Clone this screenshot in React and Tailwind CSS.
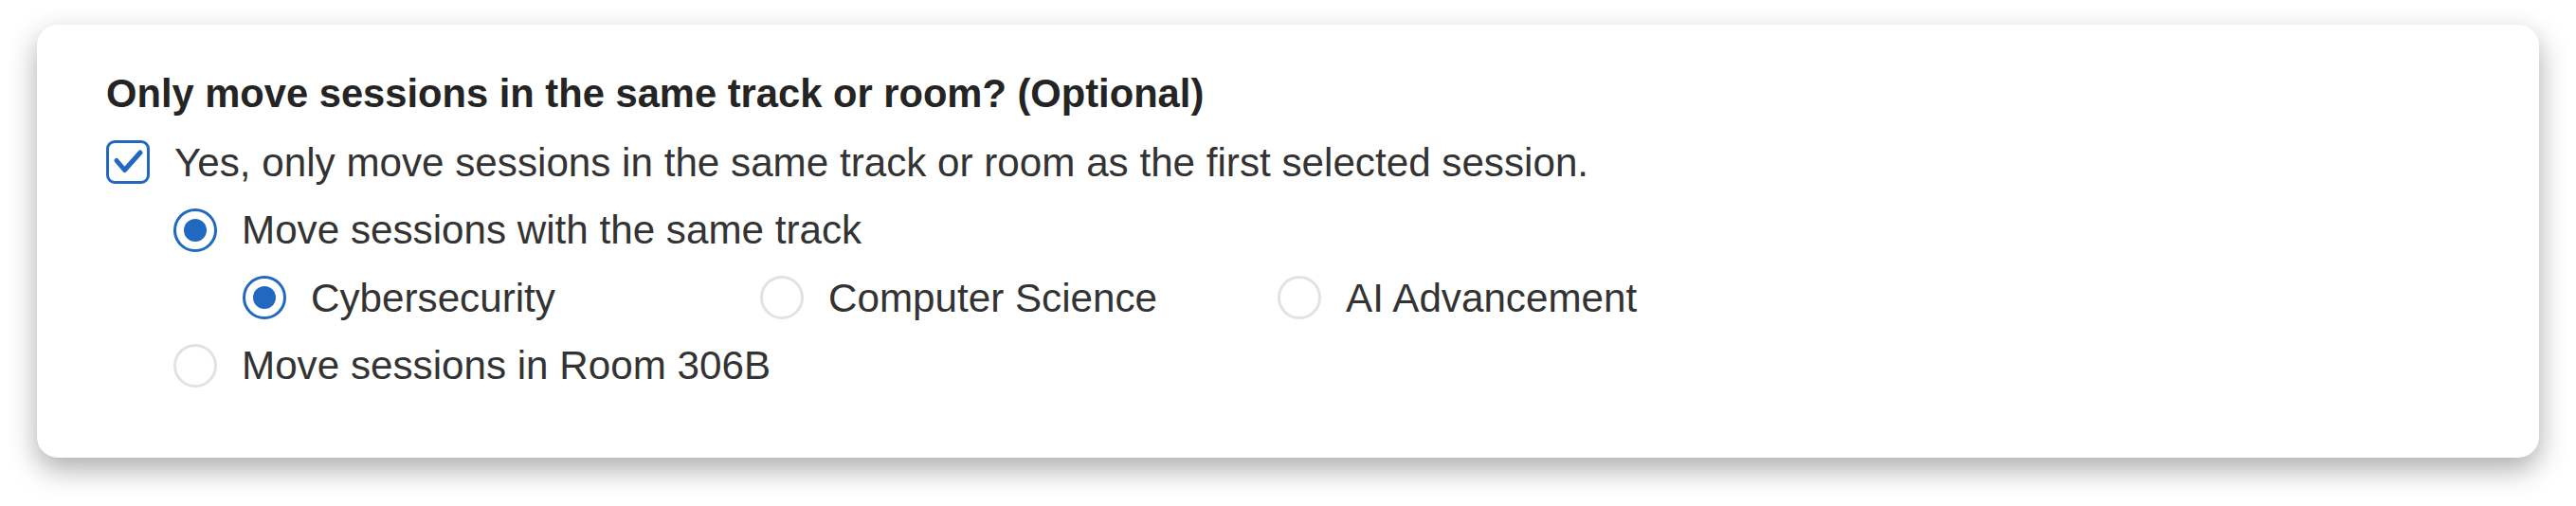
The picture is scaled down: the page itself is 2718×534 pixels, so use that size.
import React, { useState } from "react";

const tracks = ["Cybersecurity", "Computer Science", "AI Advancement"];

function Radio({ checked }) {
    return (
        <span
            className={`flex h-[46px] w-[46px] shrink-0 items-center justify-center rounded-full border-[3px] ${
                checked ? "border-[#2068c0]" : "border-[#e2e2e2]"
            }`}
        >
            {checked && <span className="h-[24px] w-[24px] rounded-full bg-[#2068c0]" />}
        </span>
    );
}

function Checkbox({ checked }) {
    return (
        <span className="flex h-[46px] w-[46px] shrink-0 items-center justify-center rounded-[9px] border-[3px] border-[#2068c0]">
            {checked && (
                <svg width="40" height="40" viewBox="0 0 40 40" fill="none">
                    <path
                        d="M8 18.5 L16.5 28.5 L33 10"
                        stroke="#2068c0"
                        strokeWidth="5"
                        strokeLinecap="round"
                        strokeLinejoin="round"
                    />
                </svg>
            )}
        </span>
    );
}

export default function App() {
    const [onlySame, setOnlySame] = useState(true);
    const [mode, setMode] = useState("track");
    const [track, setTrack] = useState("Cybersecurity");

    return (
        <div className="h-[534px] w-[2718px] bg-white pl-[39px] pt-[26px] font-['Liberation_Sans',Arial,sans-serif]">
            <div className="h-[457px] w-[2640px] rounded-[22px] bg-white pl-[73px] pt-[38px] shadow-[0_12px_30px_rgba(0,0,0,0.33)]">
                <div className="flex h-[71.5px] items-center text-[41.7px] font-bold text-[#242424]">
                    Only move sessions in the same track or room? (Optional)
                </div>
                <label
                    className="flex h-[71.5px] cursor-pointer items-center gap-[26px] text-[42.2px] text-[#333]"
                    onClick={() => setOnlySame(!onlySame)}
                >
                    <Checkbox checked={onlySame} />
                    Yes, only move sessions in the same track or room as the first selected session.
                </label>
                <div className="pl-[71px] text-[42.2px] text-[#333]">
                    <div
                        className="flex h-[71.5px] cursor-pointer items-center gap-[26px]"
                        onClick={() => setMode("track")}
                    >
                        <Radio checked={mode === "track"} />
                        Move sessions with the same track
                    </div>
                    <div className="flex h-[71.5px] items-center pl-[73px]">
                        {tracks.map((t) => (
                            <div
                                key={t}
                                className="flex w-[546px] cursor-pointer items-center gap-[26px]"
                                onClick={() => setTrack(t)}
                            >
                                <Radio checked={mode === "track" && track === t} />
                                {t}
                            </div>
                        ))}
                    </div>
                    <div
                        className="flex h-[71.5px] cursor-pointer items-center gap-[26px]"
                        onClick={() => setMode("room")}
                    >
                        <Radio checked={mode === "room"} />
                        Move sessions in Room 306B
                    </div>
                </div>
            </div>
        </div>
    );
}
